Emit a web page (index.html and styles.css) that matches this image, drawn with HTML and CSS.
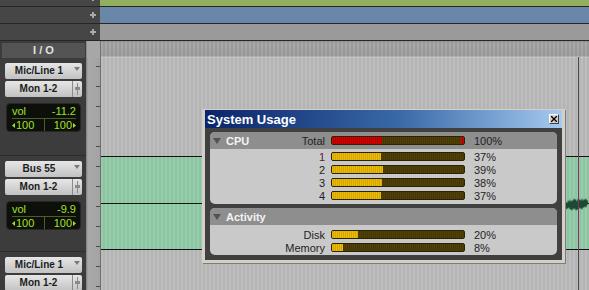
FILE: index.html
```html
<!DOCTYPE html>
<html lang="en">
<head>
    <meta charset="UTF-8">
    <title>Edit - System Usage</title>
    <link rel="stylesheet" href="styles.css">
</head>
<body>
<div class="edit">
    <!-- folder lanes at the top, partly scrolled off -->
    <div class="lanes">
        <div class="lane-row first">
            <div class="lane-head"><svg class="plus" width="6" height="6" viewBox="0 0 6 6"><path d="M2 0h2v2h2v2h-2v2h-2v-2h-2v-2h2z"/></svg></div>
            <div class="lane green-lane"></div>
        </div>
        <div class="lane-row">
            <div class="lane-head"><svg class="plus" width="6" height="6" viewBox="0 0 6 6"><path d="M2 0h2v2h2v2h-2v2h-2v-2h-2v-2h2z"/></svg></div>
            <div class="lane blue-lane"></div>
        </div>
        <div class="lane-row">
            <div class="lane-head"><svg class="plus" width="6" height="6" viewBox="0 0 6 6"><path d="M2 0h2v2h2v2h-2v2h-2v-2h-2v-2h2z"/></svg></div>
            <div class="lane grey-lane"></div>
        </div>
    </div>

    <div class="tracks">
        <div class="io-cell"><div class="io-head">I / O</div></div>
        <div class="ruler-top"></div>
        <div class="timeline"></div>

        <div class="ruler"></div>

        <!-- track 1 -->
        <div class="track-ctrl">
            <div class="btn"><span>Mic/Line 1</span><i class="drop"></i></div>
            <div class="btn"><span>Mon 1-2</span><i class="fader"></i></div>
            <div class="vol">
                <div class="vol-top"><span>vol</span><span>-11.2</span></div>
                <div class="vol-pan">
                    <span><svg width="3" height="5" viewBox="0 0 3 5"><path d="M3 0v5L0 2.5z"/></svg>100</span>
                    <span>100<svg width="3" height="5" viewBox="0 0 3 5"><path d="M0 0v5l3-2.5z"/></svg></span>
                </div>
            </div>
        </div>
        <div class="track-area"></div>

        <!-- track 2 -->
        <div class="track-ctrl">
            <div class="btn"><span>Bus 55</span><i class="drop"></i></div>
            <div class="btn"><span>Mon 1-2</span><i class="fader"></i></div>
            <div class="vol">
                <div class="vol-top"><span>vol</span><span>-9.9</span></div>
                <div class="vol-pan">
                    <span><svg width="3" height="5" viewBox="0 0 3 5"><path d="M3 0v5L0 2.5z"/></svg>100</span>
                    <span>100<svg width="3" height="5" viewBox="0 0 3 5"><path d="M0 0v5l3-2.5z"/></svg></span>
                </div>
            </div>
        </div>
        <div class="track-area">
            <div class="clip">
                <div class="clip-top"></div>
                <div class="clip-bottom"></div>
                <svg class="wave" width="24" height="16" viewBox="0 0 24 16"><path d="M0 6l1-2 1 3 1-4 1 2 1-3 1 3 1-2 1 1 1-3 1 2 1-1 1 3 1-4 1 2 1-1 1 2 1-3 1 3 1-2 1 1 1-2 1 3 1-1v4l-1 1-1 3-1-2-1 2-1-1-1 3-1-2-1 1-1-2-1 3-1-1-1 2-1-3-1 2-1-2-1 3-1-2-1 1-1-3-1 2-1-1-1 2-1-3z"/></svg>
            </div>
        </div>

        <!-- track 3 -->
        <div class="track-ctrl">
            <div class="btn"><span>Mic/Line 1</span><i class="drop"></i></div>
            <div class="btn"><span>Mon 1-2</span><i class="fader"></i></div>
        </div>
        <div class="track-area"></div>
    </div>

    <div class="playhead"></div>

    <div class="dialog">
        <div class="titlebar">
            <span>System Usage</span>
            <div class="close"><svg width="6" height="6" viewBox="0 0 6 6"><path d="M0 0l6 6M6 0l-6 6" stroke="#000" stroke-width="1.3"/></svg></div>
        </div>
        <div class="dialog-body">
            <div class="panel">
                <div class="meter-row panel-head">
                    <div class="label head-label">
                        <svg class="twisty" width="8" height="6" viewBox="0 0 8 6"><path d="M0 0h8L4 6z"/></svg>
                        <span class="panel-title">CPU</span>
                        <span class="total">Total</span>
                    </div>
                    <div class="bar red"><div class="fill" style="width:38%"></div><div class="peak"></div></div>
                    <div class="pct">100%</div>
                </div>
                <div class="panel-body cpu-body">
                    <div class="meter-row"><div class="label first-core">1</div><div class="bar"><div class="fill" style="width:37%"></div></div><div class="pct">37%</div></div>
                    <div class="meter-row"><div class="label">2</div><div class="bar"><div class="fill" style="width:39%"></div></div><div class="pct">39%</div></div>
                    <div class="meter-row"><div class="label">3</div><div class="bar"><div class="fill" style="width:38%"></div></div><div class="pct">38%</div></div>
                    <div class="meter-row"><div class="label">4</div><div class="bar"><div class="fill" style="width:37%"></div></div><div class="pct">37%</div></div>
                </div>
            </div>
            <div class="panel">
                <div class="meter-row panel-head">
                    <div class="label head-label">
                        <svg class="twisty" width="8" height="6" viewBox="0 0 8 6"><path d="M0 0h8L4 6z"/></svg>
                        <span class="panel-title">Activity</span>
                    </div>
                </div>
                <div class="panel-body activity-body">
                    <div class="meter-row"><div class="label">Disk</div><div class="bar"><div class="fill" style="width:20%"></div></div><div class="pct">20%</div></div>
                    <div class="meter-row"><div class="label">Memory</div><div class="bar"><div class="fill" style="width:8%"></div></div><div class="pct">8%</div></div>
                </div>
            </div>
        </div>
    </div>
</div>
</body>
</html>
```

FILE: styles.css
```css
body {
    margin: 0;
    background: #3c3c3c;
    font-family: "Liberation Sans", Arial, sans-serif;
    overflow: hidden;
}
.edit {
    position: relative;
    width: 589px;
    height: 290px;
    overflow: hidden;
}

/* top lanes */
.lanes {
    display: flex;
    flex-direction: column;
}
.lane-row {
    display: flex;
    height: 17px;
    box-sizing: border-box;
    border-bottom: 1px solid #262626;
}
.lane-row.first {
    margin-top: -10px;
}
.lane-head {
    width: 100px;
    background: #464646;
    display: flex;
    align-items: center;
    justify-content: flex-end;
    padding-right: 4px;
    box-sizing: border-box;
}
.plus {
    fill: #a9a9a9;
}
.lane {
    flex: 1;
}
.green-lane { background: #94ae5f; }
.blue-lane { background: #6887a9; }
.grey-lane { background: #9a9a9a; }

/* tracks grid */
.tracks {
    display: grid;
    grid-template-columns: 86px 15px 1fr;
    grid-template-rows: 17px 98px 96px 1fr;
    height: 249px;
}
.io-cell {
    padding: 2px 1px 0 2px;
    background: #3c3c3c;
}
.io-head {
    height: 15px;
    background: #545454;
    color: #e2e2e2;
    font-size: 11px;
    font-weight: bold;
    text-align: center;
    line-height: 15px;
}
.ruler-top {
    background: #a7a7a7;
    border-right: 1px solid #707070;
    border-left: 1px solid #8a8a8a;
}
.timeline {
    background:
        repeating-linear-gradient(90deg, rgba(255,255,255,0.07) 0 2px, rgba(0,0,0,0.04) 2px 4px),
        linear-gradient(#8f8f8f 0, #a2a2a2 2px, #9c9c9c 15px, #c4c4c4 16px);
}
.ruler {
    grid-column: 2;
    grid-row: 2 / 5;
    border-right: 1px solid #6e6e6e;
    background:
        repeating-linear-gradient(to bottom, transparent 0 8px, #4c4c4c 8px 9px, transparent 9px 20px) right top / 4px 100% no-repeat,
        linear-gradient(to right, #7e7e7e 0, #a9a9a9 2px, #a3a3a3 100%);
}
.track-ctrl {
    grid-column: 1;
    display: flex;
    flex-direction: column;
    gap: 2px;
    padding: 5px 4px 0 5px;
    box-sizing: border-box;
    border-bottom: 1px solid #2b2b2b;
}
.track-area {
    grid-column: 3;
    background: repeating-linear-gradient(90deg, #bdbdbd 0 2px, #b4b4b4 2px 4px);
}

/* buttons */
.btn {
    display: flex;
    height: 16px;
    border-radius: 2px;
    background: linear-gradient(#e6e6e6, #d4d4d4 50%, #c2c2c2);
    color: #1c1c1c;
    font-size: 10px;
    font-weight: bold;
    line-height: 16px;
}
.btn span {
    flex: 1;
    text-align: center;
}
.drop {
    width: 9px;
    position: relative;
}
.drop::after {
    content: "";
    position: absolute;
    left: 1px;
    top: 4px;
    border-left: 3.5px solid transparent;
    border-right: 3.5px solid transparent;
    border-top: 4px solid #7a7a7a;
}
.fader {
    width: 9px;
    border-left: 1px solid #8a8a8a;
    position: relative;
}
.fader::before {
    content: "";
    position: absolute;
    left: 4px;
    top: 2px;
    width: 1px;
    height: 12px;
    background: #8a8a8a;
}
.fader::after {
    content: "";
    position: absolute;
    left: 2px;
    top: 6px;
    width: 5px;
    height: 3px;
    background: #8a8a8a;
}

/* volume display */
.vol {
    margin: 4px 1px 0 1px;
    height: 29px;
    box-sizing: border-box;
    border: 1px solid #262626;
    border-radius: 4px;
    background: #0d100a;
    color: #a3e02c;
    font-size: 11px;
    padding: 0 4px 0 5px;
}
.vol-top {
    display: flex;
    justify-content: space-between;
    height: 14px;
    line-height: 15px;
    border-bottom: 1px solid #4e5c28;
}
.vol-pan {
    display: flex;
    height: 12px;
    line-height: 13px;
}
.vol-pan span {
    flex: 1;
    display: flex;
    align-items: center;
    gap: 1px;
}
.vol-pan span:last-child {
    justify-content: flex-end;
    border-left: 1px solid #4e5c28;
}
.vol-pan svg {
    fill: #a3e02c;
}

/* clip on track 2 */
.clip {
    position: relative;
    height: 94px;
    box-sizing: border-box;
    border-top: 1px solid #111;
    border-bottom: 1px solid #111;
    background: repeating-linear-gradient(90deg, #96cdab 0 2px, #8cc3a1 2px 4px);
}
.clip-top {
    height: 46px;
    border-bottom: 1px solid #111;
}
.wave {
    position: absolute;
    right: 0;
    top: 40px;
    fill: #1d4a33;
}
.playhead {
    position: absolute;
    left: 578px;
    top: 57px;
    bottom: 0;
    width: 1px;
    background: linear-gradient(#4a4a4a 0 99px, #8a2c68 99px 192px, #4a4a4a 192px);
}

/* system usage window */
.dialog {
    position: absolute;
    left: 202px;
    top: 109px;
    width: 363px;
    box-sizing: border-box;
    border: 3px solid #d4d0c8;
    border-top-width: 1px;
    box-shadow: 1px 1px 0 #7c7c7c;
    background: #404040;
}
.titlebar {
    height: 18px;
    display: flex;
    align-items: center;
    justify-content: space-between;
    padding: 0 2px 0 2px;
    background: linear-gradient(to right, #0a246a, #3a6aa8 55%, #a6caf0);
    color: #fff;
    font-size: 13px;
    font-weight: bold;
}
.close {
    width: 10px;
    height: 10px;
    box-sizing: border-box;
    background: #d4d0c8;
    border: 1px solid;
    border-color: #fff #404040 #404040 #fff;
    display: flex;
    align-items: center;
    justify-content: center;
    margin-right: 1px;
}
.dialog-body {
    padding: 4px 5px 5px;
    display: flex;
    flex-direction: column;
    gap: 4px;
}
.panel {
    border-radius: 5px;
    overflow: hidden;
    background: #c9c9c9;
    font-size: 11px;
    color: #1e1e1e;
}
.meter-row {
    display: grid;
    grid-template-columns: 121px 134px 1fr;
    align-items: center;
    height: 13px;
}
.panel-head {
    height: 17px;
    background: #8e8e8e;
}
.label {
    text-align: right;
    padding-right: 6px;
}
.head-label {
    display: flex;
    align-items: center;
    padding-left: 3px;
    grid-column: 1 / 2;
}
.twisty {
    fill: #525252;
    margin-right: 5px;
}
.panel-title {
    color: #f3f3f3;
    font-weight: bold;
}
.total {
    margin-left: auto;
}
.first-core {
    color: #561c48;
}
.cpu-body {
    padding: 1px 0 2px;
}
.activity-body {
    padding: 3px 0 1px;
}
.bar {
    position: relative;
    height: 9px;
    box-sizing: border-box;
    border: 1px solid #2c2400;
    border-radius: 2px;
    background: repeating-linear-gradient(90deg, #504009 0 1px, #463706 1px 2px);
    overflow: hidden;
}
.fill {
    height: 100%;
    background: repeating-linear-gradient(90deg, #ecbb08 0 1px, #d6a600 1px 2px);
}
.bar.red .fill,
.peak {
    background: repeating-linear-gradient(90deg, #d00000 0 1px, #b20000 1px 2px);
}
.peak {
    position: absolute;
    right: 0;
    top: 0;
    width: 3px;
    height: 100%;
}
.pct {
    padding-left: 9px;
}
```
